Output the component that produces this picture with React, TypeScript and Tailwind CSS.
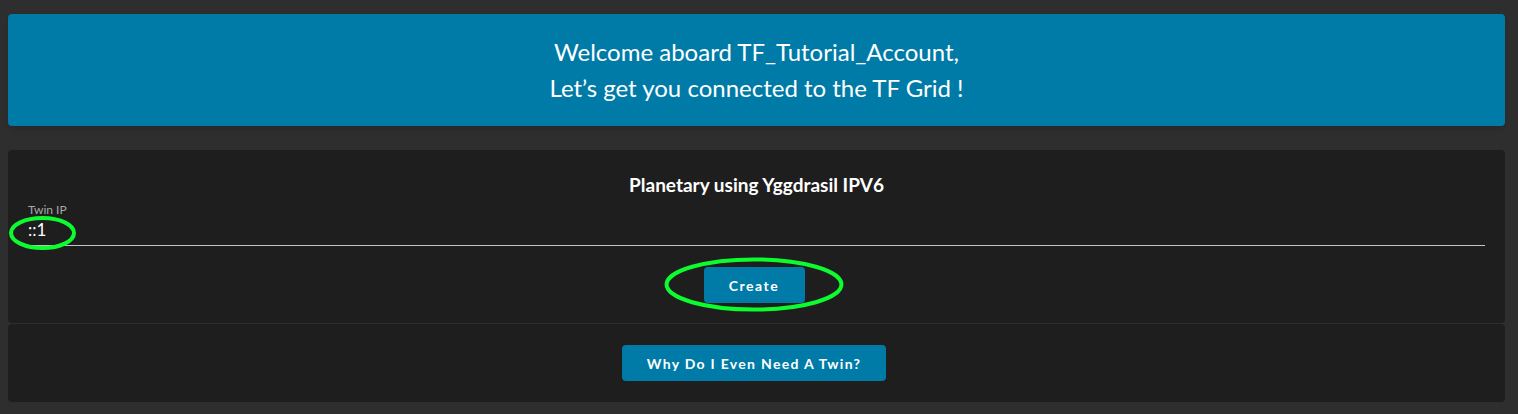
import React from 'react'

function Ring({ className }: { className: string }) {
  return (
    <svg className={`pointer-events-none absolute ${className}`} viewBox="0 0 100 100" preserveAspectRatio="none">
      <ellipse cx="50" cy="50" rx="47" ry="44" fill="none" stroke="#0dfc2f" strokeWidth="4" vectorEffect="non-scaling-stroke" />
    </svg>
  )
}

function App() {
  return (
    <div className="min-h-[414px] bg-[#2e2e2e] pt-[14px] pl-2 pr-[13px] pb-3" style={{ fontFamily: 'Lato, "Open Sans", sans-serif' }}>
      <div className="flex h-[112px] flex-col items-center justify-center rounded bg-[#007ba7] text-center text-[24px] leading-[36px] text-white shadow-md">
        <p>Welcome aboard TF_Tutorial_Account,</p>
        <p>Let’s get you connected to the TF Grid !</p>
      </div>

      <div className="mt-6 h-[173px] rounded bg-[#1e1e1e] px-5 pt-[23px]">
        <h2 className="text-center text-[19px] font-bold leading-6 text-white">Planetary using Yggdrasil IPV6</h2>
        <div className="relative mt-[6px] border-b border-[#c4c4c4] pb-[5px]">
          <label className="block text-[12px] leading-[14px] text-[#a8a8a8]">Twin IP</label>
          <div className="mt-[3px] text-[17px] leading-5 text-white">::1</div>
          <Ring className="-left-[19px] top-[13px] h-[34px] w-[67px]" />
        </div>
        <div className="relative mt-[21px] flex justify-center pr-[5px]">
          <button className="relative h-9 w-[101px] rounded bg-[#007ba7] text-[14px] font-bold tracking-[1.5px] text-white">
            Create
            <Ring className="left-1/2 -top-[11px] h-[57px] w-[186px] -translate-x-1/2" />
          </button>
        </div>
      </div>

      <div className="mt-px flex h-[78px] items-center justify-center rounded bg-[#1e1e1e] pr-[5px]">
        <button className="h-9 w-[264px] rounded bg-[#007ba7] text-[14px] font-bold tracking-[1.3px] text-white">Why Do I Even Need A Twin?</button>
      </div>
    </div>
  )
}

export default App
